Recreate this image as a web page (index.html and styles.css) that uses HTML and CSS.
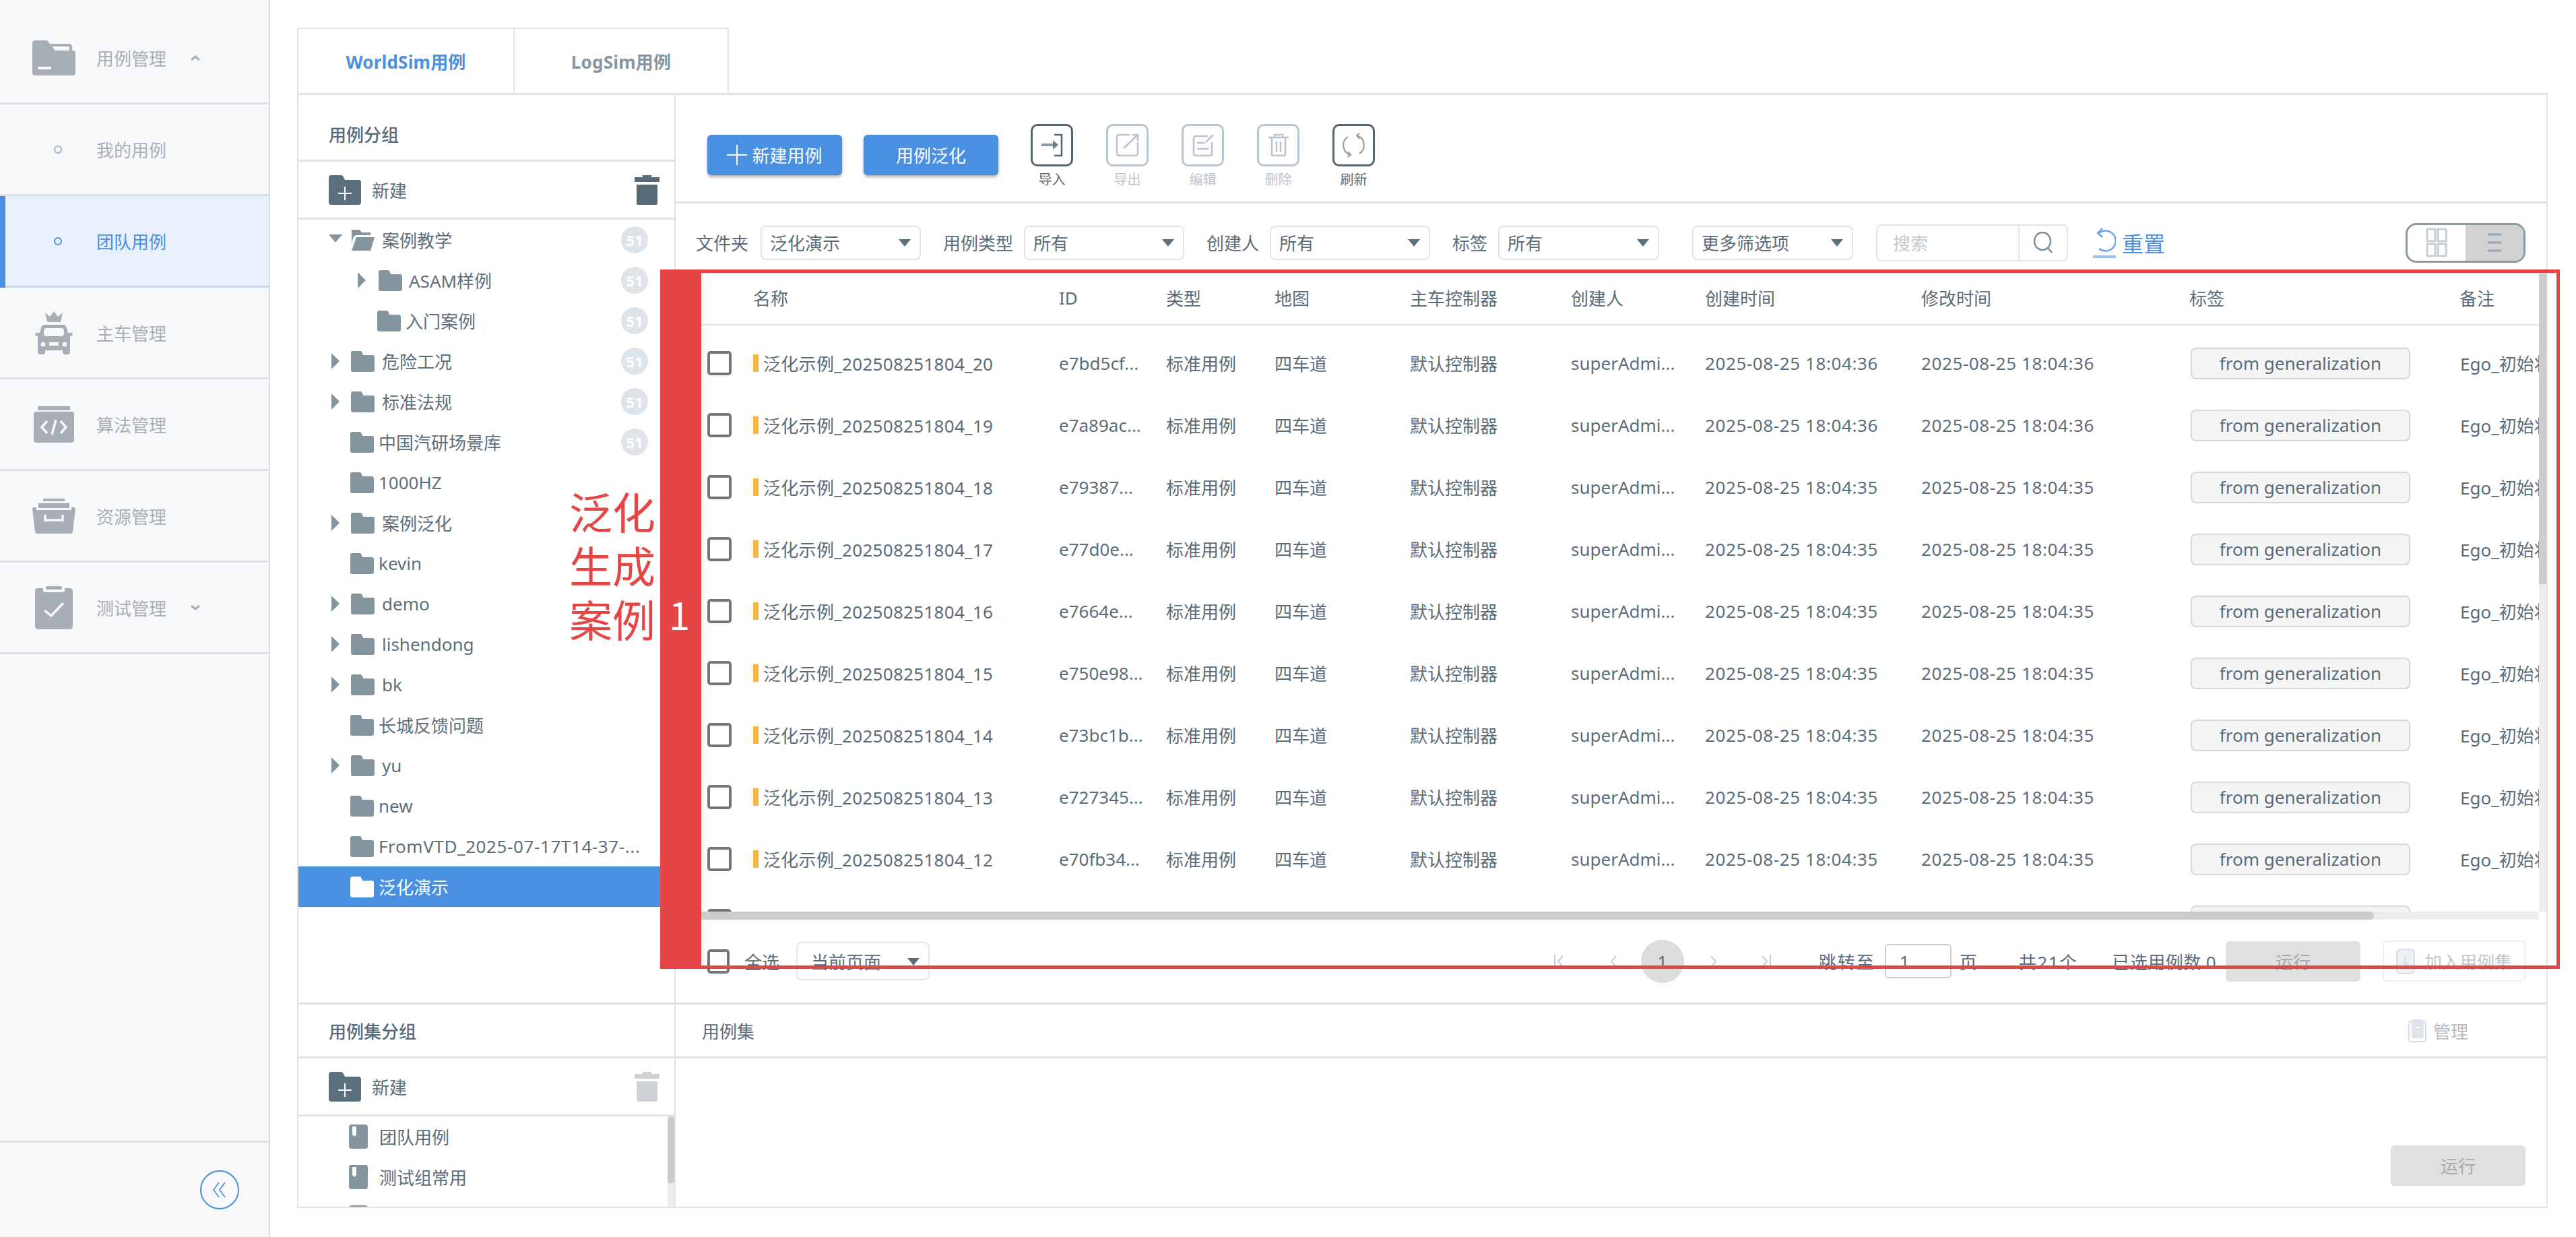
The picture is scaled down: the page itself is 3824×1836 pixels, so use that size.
FILE: index.html
```html
<!DOCTYPE html>
<html lang="zh-CN">
<head>
<meta charset="utf-8">
<title>团队用例</title>
<link rel="stylesheet" href="styles.css">
</head>
<body>
<svg class="defs" width="0" height="0" aria-hidden="true">
  <defs>
    <symbol id="folder" viewBox="0 0 35 31"><path d="M3 0H14Q16 0 17 3L18 6H32Q35 6 35 9V28Q35 31 32 31H3Q0 31 0 28V3Q0 0 3 0Z"/></symbol>
    <symbol id="book" viewBox="0 0 28 36"><path d="M4 0H24Q28 0 28 4V32Q28 36 24 36H4Q0 36 0 32V4Q0 0 4 0Z"/><path class="w" d="M5 3H11V15L8 18L5 15Z"/></symbol>
    <symbol id="newfolder" viewBox="0 0 48 44"><path d="M4 0H18Q21 0 22 3L24 7H44Q48 7 48 11V40Q48 44 44 44H4Q0 44 0 40V4Q0 0 4 0Z"/><path class="wl" d="M24 17V37M14 27H34"/></symbol>
    <symbol id="trash" viewBox="0 0 37 44"><path d="M12 0H25V3H37V10H0V3H12Z"/><path d="M3 14H34V42Q34 44 32 44H5Q3 44 3 42Z"/></symbol>
  </defs>
</svg>

<aside class="side">
  <div class="nav">
    <svg class="nico" width="64" height="52" viewBox="0 0 64 52"><path d="M4 0H22L26 5H54Q58 5 59 9V15H60Q64 15 64 19V48Q64 52 60 52H4Q0 52 0 48V4Q0 0 4 0Z"/><path class="w" d="M30 9H55V15H33Z"/><rect class="w" x="8" y="39" width="20" height="4"/></svg>
    <span>用例管理</span>
    <svg class="chev" width="16" height="10" viewBox="0 0 16 10"><path d="M2 8L8 3L14 8"/></svg>
  </div>
  <div class="nav sub"><i class="dot"></i><span>我的用例</span></div>
  <div class="nav sub on"><i class="dot"></i><span>团队用例</span></div>
  <div class="nav">
    <svg class="nico" width="56" height="64" viewBox="0 0 56 64"><path d="M15 2L22 8L28 0L34 8L41 2L38 16H18Z"/><path d="M14 20H42Q46 20 47 25L49 32H55L56 36L52 37V60Q52 64 48 64H44Q41 64 41 60V58H15V60Q15 64 12 64H8Q4 64 4 60V37L0 36L1 32H7L9 25Q10 20 14 20Z"/><rect class="w" x="13" y="25" width="30" height="12" rx="4"/><circle class="w" cx="12" cy="49" r="3.5"/><circle class="w" cx="44" cy="49" r="3.5"/><rect class="w" x="21" y="46" width="14" height="5"/></svg>
    <span>主车管理</span>
  </div>
  <div class="nav">
    <svg class="nico" width="60" height="54" viewBox="0 0 60 54"><rect x="6" y="0" width="48" height="6"/><rect y="8" width="60" height="46" rx="4"/><path class="wl" d="M20 22L12 31L20 40M33 20L27 42M40 22L48 31L40 40"/></svg>
    <span>算法管理</span>
  </div>
  <div class="nav">
    <svg class="nico" width="64" height="52" viewBox="0 0 64 52"><rect x="16" y="0" width="32" height="4"/><rect x="9" y="7" width="46" height="7"/><path d="M2 13H6V17H58V13H62Q64 14 64 16L60 49Q60 52 56 52H8Q4 52 4 49L0 16Q0 14 2 13Z"/><path class="wl" d="M19 24V32H45V24"/></svg>
    <span>资源管理</span>
  </div>
  <div class="nav">
    <svg class="nico" width="56" height="64" viewBox="0 0 56 64"><rect x="16" y="0" width="24" height="5" rx="2"/><path d="M5 3H12V6Q12 9 15 9H41Q44 9 44 6V3H51Q56 3 56 8V59Q56 64 51 64H5Q0 64 0 59V8Q0 3 5 3Z"/><path class="wl" d="M14 36L24 44L42 25"/></svg>
    <span>测试管理</span>
    <svg class="chev" width="16" height="10" viewBox="0 0 16 10"><path d="M2 2L8 7L14 2"/></svg>
  </div>
  <div class="side-foot">
    <button class="collapse"><svg width="24" height="26" viewBox="0 0 24 26"><path d="M11 2L3 13L11 24M20 2L12 13L20 24"/></svg></button>
  </div>
</aside>

<main class="main">
  <div class="tabs">
    <div class="tab active">WorldSim用例</div>
    <div class="tab second">LogSim用例</div>
  </div>
  <div class="body">
    <section class="groups">
      <div class="ghead">用例分组</div>
      <div class="gtools">
        <svg class="newf"><use href="#newfolder"/></svg><span>新建</span>
        <svg class="trash"><use href="#trash"/></svg>
      </div>
      <div class="tree">
        <div class="node l0"><i class="tri down"></i><svg class="fold" viewBox="0 0 35 31" width="35" height="31"><path d="M3 0H13L16 4H29V8H8L4 10L1 20V3Q1 0 3 0Z"/><path d="M8 11H35L29 31H1Z"/></svg><span>案例教学</span><b class="count">51</b></div>
        <div class="node l1"><i class="tri"></i><svg class="fold"><use href="#folder"/></svg><span>ASAM样例</span><b class="count">51</b></div>
        <div class="node l1 leaf"><svg class="fold"><use href="#folder"/></svg><span>入门案例</span><b class="count">51</b></div>
        <div class="node l0"><i class="tri"></i><svg class="fold"><use href="#folder"/></svg><span>危险工况</span><b class="count">51</b></div>
        <div class="node l0"><i class="tri"></i><svg class="fold"><use href="#folder"/></svg><span>标准法规</span><b class="count">51</b></div>
        <div class="node l0 leaf"><svg class="fold"><use href="#folder"/></svg><span>中国汽研场景库</span><b class="count">51</b></div>
        <div class="node l0 leaf"><svg class="fold"><use href="#folder"/></svg><span>1000HZ</span></div>
        <div class="node l0"><i class="tri"></i><svg class="fold"><use href="#folder"/></svg><span>案例泛化</span></div>
        <div class="node l0 leaf"><svg class="fold"><use href="#folder"/></svg><span>kevin</span></div>
        <div class="node l0"><i class="tri"></i><svg class="fold"><use href="#folder"/></svg><span>demo</span></div>
        <div class="node l0"><i class="tri"></i><svg class="fold"><use href="#folder"/></svg><span>lishendong</span></div>
        <div class="node l0"><i class="tri"></i><svg class="fold"><use href="#folder"/></svg><span>bk</span></div>
        <div class="node l0 leaf"><svg class="fold"><use href="#folder"/></svg><span>长城反馈问题</span></div>
        <div class="node l0"><i class="tri"></i><svg class="fold"><use href="#folder"/></svg><span>yu</span></div>
        <div class="node l0 leaf"><svg class="fold"><use href="#folder"/></svg><span>new</span></div>
        <div class="node l0 leaf"><svg class="fold"><use href="#folder"/></svg><span class="long">FromVTD_2025-07-17T14-37-...</span></div>
        <div class="node l0 leaf selected"><svg class="fold"><use href="#folder"/></svg><span>泛化演示</span></div>
      </div>
    </section>

    <section class="cases">
      <div class="toolbar">
        <button class="btn"><svg width="30" height="30" viewBox="0 0 30 30"><path d="M15 0V30M0 15H30"/></svg>新建用例</button>
        <button class="btn">用例泛化</button>
        <div class="tools">
          <div class="tool"><span class="tbox"><svg width="57" height="57" viewBox="0 0 57 57"><path d="M32 13H43V44H32" /><path class="acc" d="M13 28H36"/><path class="fillacc" d="M30 21L38 28L30 35Z"/></svg></span><small>导入</small></div>
          <div class="tool off"><span class="tbox"><svg width="57" height="57" viewBox="0 0 57 57"><path d="M32 13H17Q13 13 13 17V40Q13 44 17 44H40Q44 44 44 40V24"/><path d="M23 33L44 13M35 13H44V22"/></svg></span><small>导出</small></div>
          <div class="tool off"><span class="tbox"><svg width="57" height="57" viewBox="0 0 57 57"><path d="M36 15H18Q15 15 15 18V41Q15 44 18 44H39Q42 44 42 41V24"/><path d="M20 25H32M20 34H37M33 24L44 13"/></svg></span><small>编辑</small></div>
          <div class="tool off"><span class="tbox"><svg width="57" height="57" viewBox="0 0 57 57"><path d="M14 17H44M23 17V13H35V17M19 17V42Q19 44 21 44H37Q39 44 39 42V17"/><path d="M26 23V38M32 23V38"/></svg></span><small>删除</small></div>
          <div class="tool"><span class="tbox"><svg width="57" height="57" viewBox="0 0 57 57"><path class="thin" d="M33 14A15 15 0 0 1 37 41M24 43A15 15 0 0 1 20 16"/><path class="thin" d="M37 11L33 14L37 19M20 38L24 43L19 46"/></svg></span><small>刷新</small></div>
        </div>
      </div>

      <div class="filters">
        <label>文件夹</label><div class="sel first">泛化演示</div>
        <label class="next">用例类型</label><div class="sel">所有</div>
        <label class="next">创建人</label><div class="sel">所有</div>
        <label class="next">标签</label><div class="sel wide">所有</div>
        <div class="sel wide more">更多筛选项</div>
        <div class="search"><span class="ph">搜索</span><span class="go"><svg width="32" height="34" viewBox="0 0 32 34"><ellipse cx="15" cy="15" rx="12" ry="13"/><path d="M23 25L29 32"/></svg></span></div>
        <div class="reset"><svg width="34" height="46" viewBox="0 0 34 46"><path d="M9 9A15 15 0 1 1 9 32"/><path d="M14 2L7 9L14 15"/><path class="ul" d="M0 44H34"/></svg><span>重置</span></div>
        <div class="toggle">
          <span class="tg"><svg width="32" height="48" viewBox="0 0 32 48"><path d="M2 4H14V22H2ZM18 4H30V22H18ZM2 26H14V44H2ZM18 26H30V44H18Z"/></svg></span>
          <span class="tg cur"><svg width="22" height="32" viewBox="0 0 22 32"><path d="M1 4H21M1 16H21M1 28H21"/></svg></span>
        </div>
      </div>

      <div class="tablewrap">
        <div class="viewport">
          <div class="thead row-grid">
            <span></span><span>名称</span><span>ID</span><span>类型</span><span>地图</span><span>主车控制器</span><span>创建人</span><span>创建时间</span><span>修改时间</span><span>标签</span><span>备注</span>
          </div>
          <div class="tbody">
            <div class="row row-grid"><i class="cb"></i><span class="nm">泛化示例_202508251804_20</span><span>e7bd5cf...</span><span>标准用例</span><span>四车道</span><span>默认控制器</span><span>superAdmi...</span><span class="dt">2025-08-25 18:04:36</span><span class="dt">2025-08-25 18:04:36</span><span class="tag">from generalization</span><span class="rm">Ego_初始状态</span></div>
            <div class="row row-grid"><i class="cb"></i><span class="nm">泛化示例_202508251804_19</span><span>e7a89ac...</span><span>标准用例</span><span>四车道</span><span>默认控制器</span><span>superAdmi...</span><span class="dt">2025-08-25 18:04:36</span><span class="dt">2025-08-25 18:04:36</span><span class="tag">from generalization</span><span class="rm">Ego_初始状态</span></div>
            <div class="row row-grid"><i class="cb"></i><span class="nm">泛化示例_202508251804_18</span><span>e79387...</span><span>标准用例</span><span>四车道</span><span>默认控制器</span><span>superAdmi...</span><span class="dt">2025-08-25 18:04:35</span><span class="dt">2025-08-25 18:04:35</span><span class="tag">from generalization</span><span class="rm">Ego_初始状态</span></div>
            <div class="row row-grid"><i class="cb"></i><span class="nm">泛化示例_202508251804_17</span><span>e77d0e...</span><span>标准用例</span><span>四车道</span><span>默认控制器</span><span>superAdmi...</span><span class="dt">2025-08-25 18:04:35</span><span class="dt">2025-08-25 18:04:35</span><span class="tag">from generalization</span><span class="rm">Ego_初始状态</span></div>
            <div class="row row-grid"><i class="cb"></i><span class="nm">泛化示例_202508251804_16</span><span>e7664e...</span><span>标准用例</span><span>四车道</span><span>默认控制器</span><span>superAdmi...</span><span class="dt">2025-08-25 18:04:35</span><span class="dt">2025-08-25 18:04:35</span><span class="tag">from generalization</span><span class="rm">Ego_初始状态</span></div>
            <div class="row row-grid"><i class="cb"></i><span class="nm">泛化示例_202508251804_15</span><span>e750e98...</span><span>标准用例</span><span>四车道</span><span>默认控制器</span><span>superAdmi...</span><span class="dt">2025-08-25 18:04:35</span><span class="dt">2025-08-25 18:04:35</span><span class="tag">from generalization</span><span class="rm">Ego_初始状态</span></div>
            <div class="row row-grid"><i class="cb"></i><span class="nm">泛化示例_202508251804_14</span><span>e73bc1b...</span><span>标准用例</span><span>四车道</span><span>默认控制器</span><span>superAdmi...</span><span class="dt">2025-08-25 18:04:35</span><span class="dt">2025-08-25 18:04:35</span><span class="tag">from generalization</span><span class="rm">Ego_初始状态</span></div>
            <div class="row row-grid"><i class="cb"></i><span class="nm">泛化示例_202508251804_13</span><span>e727345...</span><span>标准用例</span><span>四车道</span><span>默认控制器</span><span>superAdmi...</span><span class="dt">2025-08-25 18:04:35</span><span class="dt">2025-08-25 18:04:35</span><span class="tag">from generalization</span><span class="rm">Ego_初始状态</span></div>
            <div class="row row-grid"><i class="cb"></i><span class="nm">泛化示例_202508251804_12</span><span>e70fb34...</span><span>标准用例</span><span>四车道</span><span>默认控制器</span><span>superAdmi...</span><span class="dt">2025-08-25 18:04:35</span><span class="dt">2025-08-25 18:04:35</span><span class="tag">from generalization</span><span class="rm">Ego_初始状态</span></div>
            <div class="row row-grid"><i class="cb"></i><span></span><span></span><span></span><span></span><span></span><span></span><span></span><span></span><span class="tag"></span></div>
          </div>
        </div>
        <div class="vbar"><i></i></div>
        <div class="hbar"><i></i></div>
      </div>

      <div class="pager">
        <i class="cb small"></i><span class="all">全选</span>
        <div class="sel page-sel">当前页面</div>
        <div class="pg">
          <svg class="pi first-p" width="20" height="24" viewBox="0 0 20 24"><path d="M2 2V22M14 4L7 12L14 20"/></svg>
          <svg class="pi prev" width="12" height="24" viewBox="0 0 12 24"><path d="M10 4L3 12L10 20"/></svg>
          <span class="cur-page">1</span>
          <svg class="pi nxt" width="12" height="24" viewBox="0 0 12 24"><path d="M2 4L9 12L2 20"/></svg>
          <svg class="pi last" width="20" height="24" viewBox="0 0 20 24"><path d="M18 2V22M6 4L13 12L6 20"/></svg>
          <span class="jump">跳转至</span>
          <span class="pinput">1</span>
          <span class="ye">页</span>
          <span class="total">共21个</span>
          <span class="chosen">已选用例数 0</span>
          <span class="run">运行</span>
          <span class="add"><svg width="28" height="38" viewBox="0 0 28 38"><rect x="1" y="1" width="26" height="36" rx="5"/><path d="M14 12V24M10 20L14 25L18 20"/></svg>加入用例集</span>
        </div>
      </div>
    </section>

    <section class="groups lower">
      <div class="ghead">用例集分组</div>
      <div class="gtools">
        <svg class="newf"><use href="#newfolder"/></svg><span>新建</span>
        <svg class="trash off"><use href="#trash"/></svg>
      </div>
      <div class="setlist">
        <div class="setrows">
          <div class="setrow"><svg class="bk"><use href="#book"/></svg><span>团队用例</span></div>
          <div class="setrow"><svg class="bk"><use href="#book"/></svg><span>测试组常用</span></div>
          <div class="setrow"><svg class="bk"><use href="#book"/></svg></div>
        </div>
        <div class="setbar"><i></i></div>
      </div>
    </section>

    <section class="sets">
      <div class="sethead"><span>用例集</span>
        <span class="manage"><svg width="27" height="34" viewBox="0 0 27 34"><rect x="1" y="3" width="25" height="30" rx="3"/><rect class="solid" x="5" y="0" width="18" height="28" rx="3"/><path class="dash" d="M11 12H17"/></svg>管理</span>
      </div>
      <div class="setbody"><span class="run">运行</span></div>
    </section>
  </div>
</main>

<div class="annot"><span class="annot-num">1</span></div>
<div class="annot-text">泛化<br>生成<br>案例</div>
</body>
</html>
```
FILE: styles.css
```css
* { box-sizing: border-box; }
html, body { height: 100%; }
body {
  margin: 0;
  height: 1836px;
  width: 3824px;
  display: flex;
  overflow: hidden;
  position: relative;
  background: #fff;
  font-family: "Noto Sans", "Noto Sans CJK SC", sans-serif;
  font-size: 26px;
  color: #5b6c79;
}
.defs { position: absolute; }
i { display: block; font-style: normal; }
b { font-weight: 400; }

/* sidebar */
.side {
  width: 401px;
  flex: none;
  background: #f7f8fa;
  border-right: 2px solid #dcdee0;
  padding-top: 19px;
  display: flex;
  flex-direction: column;
  color: #a9afb7;
}
.nav {
  height: 136px;
  flex: none;
  position: relative;
  display: flex;
  align-items: center;
  border-bottom: 3px solid #dcdee2;
}
.nav > span { position: absolute; left: 143px; top: 50%; transform: translateY(-50%); }
.nico { position: absolute; left: 80px; top: 50%; transform: translate(-50%, -50%); fill: #a8aeb6; }
.nico .w { fill: #f7f8fa; }
.wl { fill: none; stroke: #f7f8fa; stroke-width: 3.5; }
.chev { position: absolute; left: 282px; top: 50%; margin-top: -5px; fill: none; stroke: #a8aeb6; stroke-width: 3; }
.dot { position: absolute; left: 80px; top: 50%; margin-top: -6px; width: 12px; height: 12px; border: 2px solid #a9afb7; border-radius: 50%; }
.sub.on { background: #e8f0fd; color: #4a90e2; border-bottom-color: #ced6e3; }
.sub.on::before { content: ""; position: absolute; left: 0; top: 0; bottom: -3px; width: 8px; background: #4a90e2; }
.sub.on .dot { border-color: #4a90e2; }
.side-foot {
  margin-top: auto;
  height: 143px;
  border-top: 3px solid #dcdee0;
  display: flex;
  justify-content: flex-end;
  align-items: center;
  padding-right: 44px;
}
.collapse {
  width: 58px; height: 58px; padding: 0;
  border: 2px solid #4a90e2; border-radius: 50%; background: transparent;
  display: flex; align-items: center; justify-content: center;
}
.collapse svg { fill: none; stroke: #4a90e2; stroke-width: 1.6; }

/* main */
.main { flex: 1; padding: 41px 42px 0 40px; }
.tabs { display: flex; height: 97px; }
.tab {
  border: 2px solid #e2e2e2;
  border-bottom: 0;
  display: flex;
  align-items: center;
  justify-content: center;
  font-weight: 700;
  color: #87959f;
}
.tab.active { width: 323px; color: #4a90e2; letter-spacing: .2px; }
.tab.second { width: 318px; border-left: 0; letter-spacing: .2px; }
.body {
  height: 1655px;
  border: 2px solid #e2e2e2;
  border-top-width: 3px;
  display: grid;
  grid-template-columns: 560px 1fr;
  grid-template-rows: 1350px 1fr;
}
.groups { border-right: 2px solid #e2e2e2; border-bottom: 3px solid #e2e2e2; display: flex; flex-direction: column; overflow: hidden; }
.groups.lower { border-bottom: 0; }
.ghead { height: 99px; flex: none; padding: 20px 0 0 45px; display: flex; align-items: center; border-bottom: 3px solid #e2e2e2; font-weight: 500; color: #5a6b78; }
.lower .ghead { height: 80px; padding-top: 0; }
.gtools { height: 86px; flex: none; display: flex; align-items: center; padding-left: 45px; border-bottom: 3px solid #e2e2e2; }
.newf { width: 48px; height: 44px; fill: #5a6f7d; margin-right: 16px; }
symbol .wl { stroke: #fff; stroke-width: 2; }
.trash { width: 37px; height: 44px; fill: #5a6b78; margin-left: auto; margin-right: 22px; }
.trash.off { fill: #ced2d4; }

.tree { flex: 1; }
.node { height: 60px; display: flex; align-items: center; position: relative; white-space: nowrap; color: #5d6f7b; }
.fold { width: 35px; height: 31px; fill: #84959f; flex: none; }
.tri { position: absolute; top: 50%; margin-top: -12px; width: 0; height: 0; border-style: solid; border-width: 12px 0 12px 12px; border-color: transparent transparent transparent #84959f; }
.tri.down { border-width: 12px 10px 0 10px; border-color: #84959f transparent transparent; margin-top: -8px; }
.l0 { padding-left: 78px; }
.l0 .tri { left: 49px; }
.l0 .tri.down { left: 45px; }
.l0 span { margin-left: 11px; }
.l0.leaf { padding-left: 77px; }
.l0.leaf span { margin-left: 7px; }
.l1 { padding-left: 119px; }
.l1 .tri { left: 88px; }
.l1 span { margin-left: 10px; }
.l1.leaf { padding-left: 117px; }
.l1.leaf span { margin-left: 7px; }
.long { letter-spacing: .6px; }
.count { position: absolute; left: 479px; top: 50%; margin-top: -20px; width: 40px; height: 40px; border-radius: 50%; background: #dde4ea; color: #fff; display: flex; align-items: center; justify-content: center; font-size: 22px; font-weight: 700; }
.node.selected { background: #4a90e2; color: #fff; }
.selected .fold { fill: #fff; }

.cases { border-bottom: 3px solid #e2e2e2; display: flex; flex-direction: column; min-width: 0; overflow: hidden; }
.toolbar { height: 161px; flex: none; display: flex; align-items: flex-start; padding-left: 47px; border-bottom: 3px solid #e2e2e2; }
.btn {
  width: 200px; height: 60px; margin: 59px 32px 0 0; padding: 0;
  background: #4a90e2; color: #fff; border: 0; border-radius: 6px;
  box-shadow: 0 3px 4px rgba(0, 0, 0, .3);
  font: inherit;
  display: flex; align-items: center; justify-content: center; gap: 7px;
}
.btn svg { fill: none; stroke: #fff; stroke-width: 2; }
.tools { display: flex; margin: 43px 0 0 16px; gap: 49px; }
.tool { width: 63px; display: flex; flex-direction: column; align-items: center; color: #5a6b78; }
.tbox { width: 63px; height: 63px; border: 3px solid #55646f; border-radius: 10px; }
.tbox svg { display: block; fill: none; stroke: #55646f; stroke-width: 2.5; }
.tbox .acc { stroke: #8a98a3; stroke-width: 4; }
.tbox .fillacc { fill: #6d7c88; stroke: none; }
.tbox .thin { stroke: #8a98a3; stroke-width: 2; }
.tool small { font-size: 20px; line-height: 28px; margin-top: 6px; white-space: nowrap; }
.tool.off { color: #bcc3cb; }
.tool.off .tbox { border-color: #b9c4d0; }
.tool.off .tbox svg { stroke: #b9c4d0; }

.filters { height: 104px; flex: none; padding: 12px 31px 0 30px; display: flex; align-items: center; }
.filters label { white-space: nowrap; }
.filters label.next { margin-left: 33px; }
.sel {
  flex: none;
  width: 238px; height: 51px;
  margin-left: 16px;
  padding-left: 12px;
  border: 2px solid #e4e4e4; border-radius: 8px;
  display: flex; align-items: center;
  white-space: nowrap;
  position: relative;
  color: #5b6c79;
}
.sel.first { margin-left: 18px; }
.sel::after { content: ""; position: absolute; right: 13px; top: 50%; margin-top: -5px; width: 0; height: 0; border-style: solid; border-width: 11px 9px 0; border-color: #5c6f7c transparent transparent; }
.sel.wide { width: 239px; }
.sel.more { margin-left: 49px; }
.search { width: 285px; height: 55px; margin-left: 34px; border: 2px solid #e4e4e4; border-radius: 8px; display: flex; align-items: center; flex: none; }
.ph { flex: 1; padding-left: 23px; color: #c5c9cc; }
.go { width: 72px; height: 100%; border-left: 2px solid #e4e4e4; display: flex; align-items: center; justify-content: center; }
.go svg { fill: none; stroke: #7e8d98; stroke-width: 2.5; }
.reset { margin-left: 37px; display: flex; align-items: center; gap: 9px; color: #4a90e2; font-size: 32px; }
.reset svg { fill: none; stroke: #6ba6ea; stroke-width: 2.5; }
.reset .ul { stroke: #9cc3f0; stroke-width: 4; }
.toggle { margin-left: auto; width: 178px; height: 59px; border: 3px solid #8a9aa3; border-radius: 16px; display: flex; overflow: hidden; flex: none; }
.tg { flex: 1; display: flex; align-items: center; justify-content: center; }
.tg svg { fill: none; stroke: #c6cfd4; stroke-width: 3; }
.tg.cur { background: #d2d2d2; }
.tg.cur svg { stroke: #96a2ab; }

.tablewrap { height: 959px; flex: none; display: grid; grid-template-columns: 2766px 1fr; grid-template-rows: 947px 12px; }
.viewport { overflow: hidden; }
.row-grid {
  display: grid;
  grid-template-columns: 68px 454px 159px 161px 201px 239px 199px 321px 398px 401px 300px;
  padding-left: 47px;
  width: 3000px;
  align-items: center;
  white-space: nowrap;
}
.thead { height: 77px; border-bottom: 2px solid #e2e2e2; padding-bottom: 4px; }
.tbody { padding-top: 10px; }
.row { height: 92px; }
.cb { width: 36px; height: 36px; border: 4px solid #757575; border-radius: 5px; flex: none; }
.nm { position: relative; padding-left: 15px; letter-spacing: .3px; }
.nm::before { content: ""; position: absolute; left: 0; top: 50%; margin-top: -13px; width: 8px; height: 26px; background: #fbb440; }
.dt { letter-spacing: .6px; }
.tag {
  justify-self: start;
  margin-left: 2px;
  width: 326px; height: 47px;
  background: #f5f5f5;
  border: 2px solid #d5d7d8; border-radius: 8px;
  display: flex; align-items: center; justify-content: center;
}
.rm { margin-left: 1px; }
.vbar { background: #ededed; }
.vbar i { height: 461px; background: #c9cdd0; }
.hbar { background: #ededed; }
.hbar i { width: 2521px; height: 12px; background: #c9cdd0; border-radius: 0 6px 6px 0; }

.pager { flex: 1; display: flex; align-items: center; padding: 0 31px 0 47px; white-space: nowrap; }
.cb.small { width: 33px; height: 36px; }
.all { margin-left: 22px; }
.sel.page-sel { width: 198px; height: 57px; margin-left: 25px; padding-left: 20px; }
.pg { margin-left: auto; display: flex; align-items: center; }
.pi { fill: none; stroke: #c5cfd6; stroke-width: 2; flex: none; }
.prev { margin-left: 63px; }
.cur-page { width: 64px; height: 64px; margin-left: 35px; border-radius: 50%; background: #dcdcdc; display: flex; align-items: center; justify-content: center; }
.nxt { margin-left: 38px; }
.last { margin-left: 60px; }
.jump { margin-left: 70px; letter-spacing: 2px; }
.pinput { width: 99px; height: 51px; margin-left: 14px; border: 2px solid #c9ced2; border-radius: 6px; padding-left: 20px; display: flex; align-items: center; }
.ye { margin-left: 12px; }
.total { margin-left: 62px; letter-spacing: 1.5px; }
.chosen { margin-left: 51px; letter-spacing: .4px; }
.run { width: 200px; height: 60px; background: #e0e0e0; border-radius: 6px; color: #a8a8a8; display: flex; align-items: center; justify-content: center; flex: none; }
.pg .run { margin-left: 14px; }
.add { width: 212px; height: 61px; margin-left: 33px; border: 2px solid #ececec; border-radius: 6px; color: #c4c8cc; display: flex; align-items: center; justify-content: center; gap: 14px; }
.add svg { fill: #eceff3; stroke: #d8dde3; stroke-width: 2; flex: none; }

.setlist { flex: 1; display: flex; overflow: hidden; }
.setrows { flex: 1; }
.setrow { height: 60px; display: flex; align-items: center; padding-left: 75px; gap: 17px; }
.bk { width: 28px; height: 36px; fill: #84959f; flex: none; }
symbol .w { fill: #fff; }
.setbar { width: 10px; background: #ededed; }
.setbar i { height: 100px; background: #c9cdd0; border-radius: 5px; }

.sets { display: flex; flex-direction: column; }
.sethead { height: 80px; flex: none; display: flex; align-items: center; justify-content: space-between; padding: 0 116px 0 39px; border-bottom: 3px solid #e2e2e2; }
.manage { display: flex; align-items: center; gap: 10px; color: #b8bdc2; }
.manage svg { fill: #fff; stroke: #d7dde3; stroke-width: 2; }
.manage .solid { fill: #dfe4ea; stroke: none; }
.manage .dash { stroke: #fff; stroke-width: 2; }
.setbody { flex: 1; display: flex; justify-content: flex-end; padding: 129px 31px 0 0; }

/* red annotation drawn over the screenshot */
.annot {
  position: absolute;
  left: 980px; top: 400px;
  width: 2820px; height: 1038px;
  border: 5px solid #e64545;
  border-left: 61px solid #e64545;
  pointer-events: none;
}
.annot-num {
  position: absolute;
  left: -63px; top: 470px;
  width: 61px;
  text-align: center;
  color: #fff;
  font: 56px/72px "Noto Sans CJK SC", sans-serif;
}
.annot-text {
  position: absolute;
  left: 845px; top: 717px;
  color: #e64545;
  font: 64px/80px "Noto Sans CJK SC", sans-serif;
}
```
